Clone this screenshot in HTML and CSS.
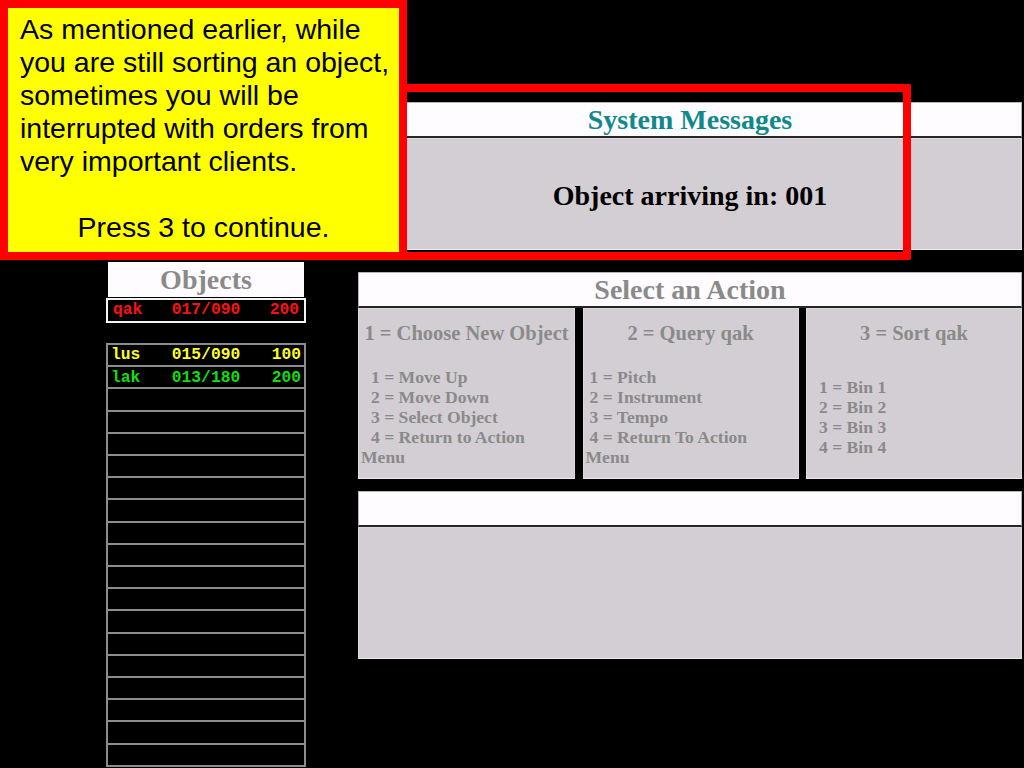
FILE: index.html
```html
<!DOCTYPE html>
<html lang="en">
<head>
<meta charset="utf-8">
<title>Sorting Task</title>
<link rel="stylesheet" href="styles.css">
</head>
<body>
<div class="screen">
  <div class="left">
    <div class="obj-head">Objects</div>
    <div class="obj-row selected red"><span>qak</span><span>017/090</span><span>200</span></div>
    <div class="obj-list">
      <div class="obj-row yellow"><span>lus</span><span>015/090</span><span>100</span></div>
      <div class="obj-row green"><span>lak</span><span>013/180</span><span>200</span></div>
      <div class="obj-row"></div>
      <div class="obj-row"></div>
      <div class="obj-row"></div>
      <div class="obj-row"></div>
      <div class="obj-row"></div>
      <div class="obj-row"></div>
      <div class="obj-row"></div>
      <div class="obj-row"></div>
      <div class="obj-row"></div>
      <div class="obj-row"></div>
      <div class="obj-row"></div>
      <div class="obj-row"></div>
      <div class="obj-row"></div>
      <div class="obj-row"></div>
      <div class="obj-row"></div>
      <div class="obj-row"></div>
      <div class="obj-row"></div>
    </div>
  </div>
  <div class="right">
    <section class="panel sys">
      <div class="phead teal">System Messages</div>
      <div class="pbody sys-body">Object arriving in: 001</div>
    </section>
    <section class="panel action">
      <div class="phead">Select an Action</div>
      <div class="boxes">
        <div class="box box-1">
          <div class="box-title">1 = Choose New Object</div>
          <div class="box-items">
            <ul>
              <li>1 = Move Up</li>
              <li>2 = Move Down</li>
              <li>3 = Select Object</li>
              <li>4 = Return to Action Menu</li>
            </ul>
          </div>
        </div>
        <div class="box box-2">
          <div class="box-title">2 = Query qak</div>
          <div class="box-items">
            <ul>
              <li>1 = Pitch</li>
              <li>2 = Instrument</li>
              <li>3 = Tempo</li>
              <li>4 = Return To Action Menu</li>
            </ul>
          </div>
        </div>
        <div class="box box-3">
          <div class="box-title">3 = Sort qak</div>
          <div class="box-items">
            <ul>
              <li>1 = Bin 1</li>
              <li>2 = Bin 2</li>
              <li>3 = Bin 3</li>
              <li>4 = Bin 4</li>
            </ul>
          </div>
        </div>
      </div>
    </section>
    <section class="panel feedback">
      <div class="phead"></div>
      <div class="pbody feedback-body"></div>
    </section>
  </div>
</div>

<div class="tip">
  <p>As mentioned earlier, while<br>you are still sorting an object,<br>sometimes you will be<br>interrupted with orders from<br>very important clients.</p>
  <p class="tip-press">Press 3 to continue.</p>
</div>
<div class="highlight"></div>
</body>
</html>
```
FILE: styles.css
```css
html, body {
  margin: 0;
  padding: 0;
}
body {
  background: #000;
  width: 1024px;
  height: 768px;
  overflow: hidden;
  position: relative;
  font-family: "Liberation Serif", "Times New Roman", serif;
}

.screen {
  display: flex;
  align-items: flex-start;
  padding-left: 106px;
  gap: 52px;
}

/* ---------- left column: objects ---------- */
.left {
  width: 200px;
  padding-top: 262px;
  display: flex;
  flex-direction: column;
}
.obj-head {
  margin: 0 2px;
  height: 35px;
  background: #fefcfe;
  color: #8a8a8a;
  font-weight: bold;
  font-size: 28px;
  line-height: 35px;
  text-align: center;
}
.obj-row {
  box-sizing: border-box;
  display: flex;
  justify-content: space-between;
  align-items: center;
  padding: 0 5px;
  font-family: "Liberation Mono", "Courier New", monospace;
  font-weight: bold;
  font-size: 16.3px;
  line-height: 1;
}
.obj-row.selected {
  margin-top: 1px;
  height: 25px;
  border: 2px solid #f4f4f4;
}
.obj-list {
  margin-top: 20px;
  height: 424px;
  display: flex;
  flex-direction: column;
  border-left: 2px solid #8c8c8c;
  border-right: 2px solid #8c8c8c;
  border-bottom: 2px solid #8c8c8c;
  box-sizing: border-box;
}
.obj-list .obj-row {
  flex: 1;
  border-top: 2px solid #8c8c8c;
  padding: 1px 3px 0;
}
.red { color: #ff1010; }
.yellow { color: #ffff20; }
.green { color: #10dd10; }

/* ---------- right column: panels ---------- */
.right {
  width: 664px;
  padding-top: 102px;
  display: flex;
  flex-direction: column;
}
.panel + .panel.action { margin-top: 22px; }
.panel + .panel.feedback { margin-top: 12px; }

.phead {
  box-sizing: border-box;
  height: 36px;
  background: #fefcfe;
  border: 1px solid #b4b4b4;
  border-bottom: 2px solid #262626;
  color: #8a8a8a;
  font-weight: bold;
  font-size: 28px;
  line-height: 33px;
  text-align: center;
}
.phead.teal { color: #11898b; }

.pbody {
  box-sizing: border-box;
  background: #d3ced3;
  border: 1px solid #dedade;
  border-bottom-color: #ececec;
}
.sys-body {
  height: 112px;
  display: flex;
  align-items: center;
  justify-content: center;
  color: #000;
  font-weight: bold;
  font-size: 28px;
  padding-top: 3px;
}
.feedback-body { height: 132px; }

.boxes {
  display: grid;
  grid-template-columns: 217px 216px 216px;
  column-gap: 7.5px;
  height: 171px;
}
.box {
  box-sizing: border-box;
  background: #d3ced3;
  border: 1px solid #dcd8dc;
  border-bottom-color: #ececec;
  display: flex;
  flex-direction: column;
  color: #8a8a8a;
  font-weight: bold;
}
.box-title {
  padding-top: 12px;
  margin-bottom: 11px;
  font-size: 20.5px;
  line-height: 24px;
  text-align: center;
  white-space: nowrap;
}
.box-items {
  flex: 1;
  display: flex;
  align-items: center;
}
.box-items ul {
  list-style: none;
  margin: 0;
  padding: 0 10px 0 2px;
  font-size: 17.6px;
  line-height: 20px;
}
.box-1 .box-items li { text-indent: 10px; }
.box-2 .box-items li { text-indent: 4px; }
.box-3 .box-items ul { padding-left: 12px; }

/* ---------- overlays ---------- */
.tip {
  position: absolute;
  left: 0;
  top: 0;
  box-sizing: border-box;
  width: 407px;
  height: 260px;
  background: #ffff00;
  border: 8px solid #ff0000;
  padding: 5px 6px 0 12px;
  font-family: "Liberation Sans", Arial, sans-serif;
  font-size: 28.5px;
  line-height: 33px;
  color: #000;
}
.tip p {
  margin: 0;
  white-space: nowrap;
}
.tip .tip-press {
  margin-top: 33px;
  text-align: center;
  padding-right: 6px;
}
.highlight {
  position: absolute;
  left: 399px;
  top: 84px;
  box-sizing: border-box;
  width: 512px;
  height: 176px;
  border: 8px solid #ff0000;
  border-radius: 2px;
}
```
